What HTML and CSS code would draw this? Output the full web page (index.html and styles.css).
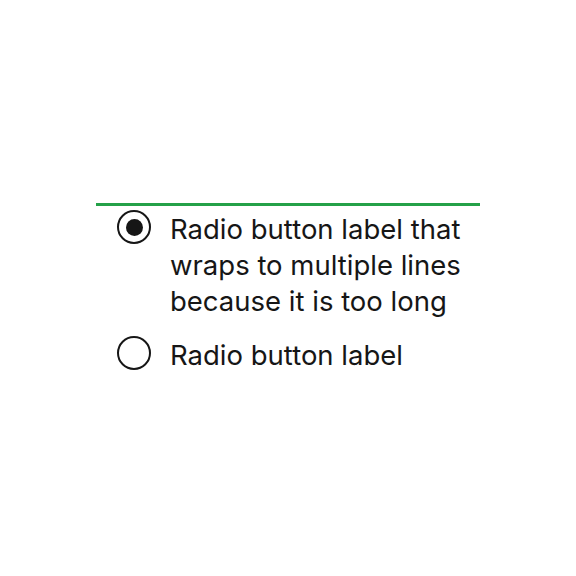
FILE: index.html
```html
<!DOCTYPE html>
<html lang="en">
<head>
  <meta charset="UTF-8">
  <title>Radio buttons</title>
  <link rel="stylesheet" href="styles.css">
</head>
<body>
  <fieldset class="radio-group">
    <label class="radio">
      <input type="radio" name="choice" checked>
      <span class="radio-circle"></span>
      <span class="radio-label">Radio button label that wraps to multiple lines because it is too long</span>
    </label>
    <label class="radio">
      <input type="radio" name="choice">
      <span class="radio-circle"></span>
      <span class="radio-label">Radio button label</span>
    </label>
  </fieldset>
</body>
</html>
```

FILE: styles.css
```css
body {
  margin: 0;
  background: #ffffff;
  font-family: Inter, "Liberation Sans", sans-serif;
  color: #161616;
}
.radio-group {
  width: 384px;
  margin: 203px auto 0;
  padding: 5px 0 0 21px;
  border: none;
  border-top: 3px solid #24a148;
  box-sizing: border-box;
  display: flex;
  flex-direction: column;
  gap: 18px;
}
.radio {
  display: flex;
  align-items: flex-start;
  gap: 19px;
  cursor: pointer;
}
.radio input {
  position: absolute;
  opacity: 0;
  width: 0;
  height: 0;
}
.radio-circle {
  flex: none;
  width: 34px;
  height: 34px;
  margin-top: -1px;
  border: 2.5px solid #161616;
  border-radius: 50%;
  box-sizing: border-box;
  display: flex;
  align-items: center;
  justify-content: center;
}
.radio input:checked + .radio-circle::after {
  content: "";
  width: 17px;
  height: 17px;
  border-radius: 50%;
  background: #161616;
}
.radio-label {
  font-size: 27.5px;
  line-height: 36px;
  max-width: 305px;
}
```
